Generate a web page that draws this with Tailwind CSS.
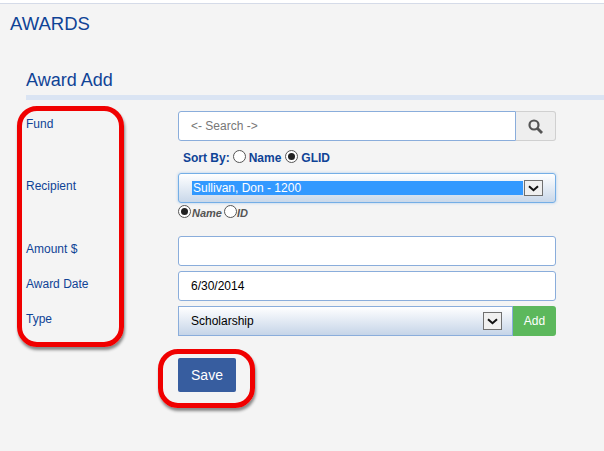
<!doctype html>
<html>
  <head>
    <title>Awards</title>
    <script src="https://cdn.jsdelivr.net/npm/@tailwindcss/browser@4"></script>
  </head>
  <body class="bg-[#f4f4f4] h-[451px] overflow-hidden relative font-['Liberation_Sans',Arial,sans-serif]">
    <div class="h-[3px] bg-white"></div>
    <div class="h-px bg-[#d5dbe8]"></div>

    <h1 class="pl-[10px] pt-[8px] text-[18.5px] leading-[23px] text-[#0f4396]">AWARDS</h1>

    <!-- Form -->
    <div class="pl-[26px] pt-[35px]">
      <h2 class="text-[18px] leading-[21px] text-[#0f4396]">Award Add</h2>
      <div class="h-[5px] mt-[4px] bg-[#dae4f3]"></div>

      <div class="flex mt-[11px]">
        <!-- Labels -->
        <div class="w-[152px] pt-[5px] text-[12px] leading-[14px] text-[#0f4396]">
          <div class="h-[63px] pt-[1px]">Fund</div>
          <div class="h-[63px]">Recipient</div>
          <div class="h-[35px]">Amount $</div>
          <div class="h-[35px]">Award Date</div>
          <div>Type</div>
        </div>

        <!-- Fields -->
        <div class="w-[378px] text-[12px]">
          <div class="flex h-[30px]">
            <div class="flex-1 bg-white border border-[#8aaddb] rounded-l-[3px] pl-[12px] leading-[28px] text-[#777]">&lt;- Search -&gt;</div>
            <div class="w-[40px] bg-[#eeeeee] border border-l-0 border-[#d0d0d0] rounded-r-[3px] flex items-center justify-center">
              <svg width="15" height="15" viewBox="0 0 15 15" fill="none" stroke="#555" stroke-width="2.2"><circle cx="6" cy="6" r="4.5"/><path d="M9.5 9.5L14 14" stroke-width="2.8"/></svg>
            </div>
          </div>

          <div class="flex items-center h-[32px] pl-[5px] pt-px font-bold text-[#0f4396]">
            <span>Sort By:</span>
            <span class="w-[13px] h-[13px] rounded-full border border-[#555] bg-white ml-[3px] mr-[3px] -mt-[2px]"></span>
            <span>Name</span>
            <span class="w-[13px] h-[13px] rounded-full border border-[#555] bg-white ml-[4px] mr-[3px] -mt-[2px] flex items-center justify-center"><span class="w-[7px] h-[7px] rounded-full bg-[#222]"></span></span>
            <span>GLID</span>
          </div>

          <div class="h-[30px] border border-[#74aee6] rounded-[3px] bg-linear-to-b from-white to-[#c9d8ea] shadow-[0_0_3px_#a9c9ec] flex items-center pl-[13px] pr-[12px]">
            <div class="flex-1 h-[14px] bg-[#3399ff] text-white leading-[14px] pl-px">Sullivan, Don - 1200</div>
            <div class="w-[19px] h-[16px] ml-px bg-[#f0f0f0] border border-[#707070] flex items-center justify-center">
              <svg width="11" height="7" viewBox="0 0 11 7" fill="none" stroke="#111" stroke-width="2"><path d="M1 1.2L5.5 5.2L10 1.2"/></svg>
            </div>
          </div>

          <div class="flex items-center h-[16px] italic font-bold text-[11px] text-[#555]">
            <span class="w-[13px] h-[13px] rounded-full border border-[#555] bg-white flex items-center justify-center"><span class="w-[7px] h-[7px] rounded-full bg-[#222]"></span></span>
            <span class="mt-[5px] ml-px">Name</span>
            <span class="w-[13px] h-[13px] rounded-full border border-[#555] bg-white ml-[2px]"></span>
            <span class="mt-[5px]">ID</span>
          </div>

          <div class="h-[30px] mt-[17px] bg-white border border-[#8aaddb] rounded-[3px]"></div>
          <div class="h-[30px] mt-[5px] bg-white border border-[#8aaddb] rounded-[3px] pl-[12px] leading-[28px] text-black">6/30/2014</div>

          <div class="flex h-[30px] mt-[5px]">
            <div class="flex-1 border border-[#8aaddb] bg-linear-to-b from-white to-[#c6d5e8] flex items-center pl-[12px] pr-[10px] text-black">
              <span class="flex-1">Scholarship</span>
              <div class="w-[19px] h-[18px] bg-[#f0f0f0] border border-[#707070] flex items-center justify-center">
                <svg width="11" height="7" viewBox="0 0 11 7" fill="none" stroke="#111" stroke-width="2"><path d="M1 1.2L5.5 5.2L10 1.2"/></svg>
              </div>
            </div>
            <div class="w-[43px] bg-[#5cb85c] rounded-r-[3px] text-white text-center leading-[30px]">Add</div>
          </div>

          <div class="w-[58px] h-[34px] mt-[22px] bg-[#375d9f] rounded-[2px] text-white text-[14px] text-center leading-[34px]">Save</div>
        </div>
      </div>
    </div>

    <!-- Red callouts -->
    <div class="absolute left-[17px] top-[106px] w-[107px] h-[241px] border-[5px] border-[#f00000] rounded-[20px] shadow-[1px_3px_3px_rgba(0,0,0,0.45)]"></div>
    <div class="absolute left-[158px] top-[349px] w-[97px] h-[59px] border-[5px] border-[#f00000] rounded-[20px] shadow-[1px_3px_3px_rgba(0,0,0,0.45)]"></div>
  </body>
</html>
